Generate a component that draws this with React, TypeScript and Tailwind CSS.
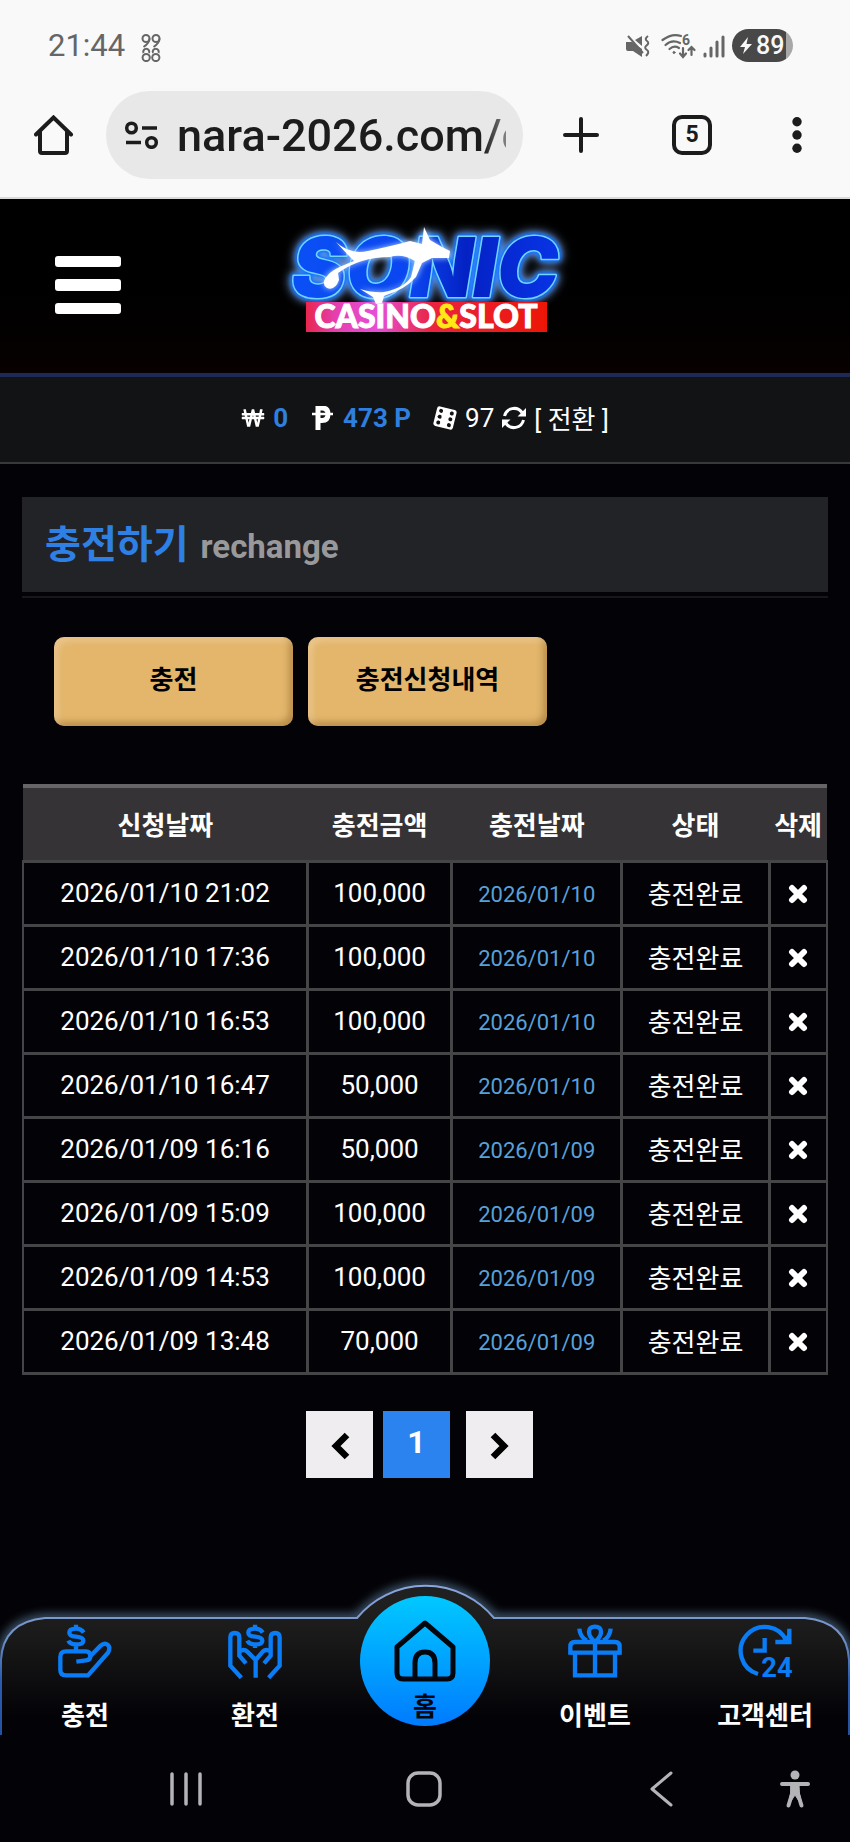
import React from "react";
import { FaWonSign } from "react-icons/fa";

type Deposit = { requested: string; amount: string; credited: string };

const deposits: Deposit[] = [
  { requested: "2026/01/10 21:02", amount: "100,000", credited: "2026/01/10" },
  { requested: "2026/01/10 17:36", amount: "100,000", credited: "2026/01/10" },
  { requested: "2026/01/10 16:53", amount: "100,000", credited: "2026/01/10" },
  { requested: "2026/01/10 16:47", amount: "50,000", credited: "2026/01/10" },
  { requested: "2026/01/09 16:16", amount: "50,000", credited: "2026/01/09" },
  { requested: "2026/01/09 15:09", amount: "100,000", credited: "2026/01/09" },
  { requested: "2026/01/09 14:53", amount: "100,000", credited: "2026/01/09" },
  { requested: "2026/01/09 13:48", amount: "70,000", credited: "2026/01/09" },
];

function StatusBar() {
  return (
    <div className="flex h-[91px] items-center justify-between pr-[57px] pl-12 text-[#666]">
      <div className="flex items-center gap-4">
        <span className="text-[31px] leading-8">21:44</span>
        <svg className="mt-1 h-7 w-5" viewBox="0 0 20 28" fill="none" stroke="currentColor" strokeWidth="2">
          <circle cx="5" cy="4.500" r="3.500" />
          <path d="M8.500 4.500 Q8.500 9 2.500 13" />
          <circle cx="15" cy="4.500" r="3.500" />
          <path d="M18.500 4.500 Q18.500 9 12.500 13" />
          <circle cx="5.200" cy="23.500" r="3.600" />
          <circle cx="14.800" cy="23.500" r="3.600" />
          <path d="M2.500 19 A3 3 0 1 1 8 19 M12 19 A3 3 0 1 1 17.500 19" />
        </svg>
      </div>
      <div className="flex items-center">
        <svg className="h-6 w-6" viewBox="0 0 24 24" fill="currentColor">
          <path d="M0 8 H6 L16 15 V23 L7 17 H2 Q0 17 0 15 Z" />
          <path d="M16 2 V12 L9 6 Z" />
          <path d="M2 2 L17 19" stroke="currentColor" strokeWidth="2" />
          <path d="M22 2 Q18 5 21 7 Q24 9 20 12 Q18 14 21 16 Q24 18 20 22" fill="none" stroke="currentColor" strokeWidth="2" />
        </svg>
        <svg className="ml-[11px] h-6 w-[35px] overflow-visible" viewBox="0 0 35 24" fill="none" stroke="currentColor" strokeWidth="2.200" strokeLinecap="round">
          <path d="M1.500 6 Q11 -1 20 2" />
          <path d="M4.500 11 Q11 5 19 9" />
          <path d="M8.500 15 Q13 11 18 14" />
          <circle cx="13" cy="18.500" r="1" fill="currentColor" strokeWidth="1" />
          <path d="M22 14 V22 M19 19.500 L22 23 L25 19.500 M30.500 21 V13 M27.500 16 L30.500 13 L33.500 16" />
          <text x="21" y="11" fontSize="14" fontWeight="700" fill="currentColor" stroke="none">6</text>
        </svg>
        <svg className="ml-[7px] h-6 w-[22px]" viewBox="0 0 22 24" stroke="currentColor" strokeWidth="3" strokeLinecap="round">
          <path d="M2 20 V22 M8 14 V22 M14 8 V22 M20 3 V22" />
        </svg>
        <div className="ml-[7px] flex h-[33px] w-[61px] items-center rounded-full bg-[linear-gradient(to_right,#484848_88%,#a8a8a8_88%)] pl-2 text-[#f8f8f8]">
          <svg className="h-[17px] w-3" viewBox="0 0 12 17" fill="currentColor">
            <path d="M8 0 L0 10 H5 L3 17 L12 7 H6.500 Z" />
          </svg>
          <span className="ml-1 text-[25px] leading-8 font-medium">89</span>
        </div>
      </div>
    </div>
  );
}

function BrowserBar() {
  return (
    <div className="flex h-[108px] items-start border-b-2 border-[#dadada] pr-[33px] pl-[34px] text-[#1c1c1c]">
      <button type="button" aria-label="홈페이지" className="mt-6 h-10 w-10">
        <svg className="h-10 w-10" viewBox="0 0 40 40" fill="none" stroke="currentColor" strokeWidth="4" strokeLinecap="round" strokeLinejoin="round">
          <path d="M2 19.500 L19.500 2.500 L37 19.500" strokeLinejoin="miter" />
          <path d="M6 17 V36 Q6 38 8 38 H31 Q33 38 33 36 V17" />
        </svg>
      </button>
      <div className="ml-8 flex h-[88px] min-w-0 flex-1 items-center rounded-full bg-[#e8e8e8] pr-[17px] pl-[18px]">
        <svg className="h-7 w-[35px] shrink-0" viewBox="0 0 35 28" fill="none" stroke="currentColor" strokeWidth="3.500">
          <circle cx="7.500" cy="7" r="4.800" />
          <circle cx="27.500" cy="21.500" r="4.800" />
          <path d="M18 7 H33 M2 21.500 H17" />
        </svg>
        <input
          aria-label="주소"
          defaultValue="nara-2026.com/c"
          className="ml-[18px] h-[88px] min-w-0 flex-1 bg-transparent text-[45px] font-medium outline-none [mask-image:linear-gradient(to_right,#000_93%,rgba(0,0,0,0.5))]"
        />
      </div>
      <button type="button" aria-label="새 탭" className="mt-[26px] ml-10 h-9 w-9">
        <svg className="h-9 w-9" viewBox="0 0 36 36" stroke="currentColor" strokeWidth="4" strokeLinecap="round">
          <path d="M18 2 V34 M2 18 H34" />
        </svg>
      </button>
      <button type="button" aria-label="탭 5개" className="mt-6 ml-[73px] flex h-10 w-10 items-center justify-center rounded-[10px] border-4 border-[#1c1c1c] text-[23px] leading-8 font-bold">
        5
      </button>
      <button type="button" aria-label="메뉴 더보기" className="mt-[26px] ml-[65px] flex h-9 w-10 items-center justify-center">
        <svg className="h-9 w-[10px]" viewBox="0 0 10 36" fill="currentColor">
          <circle cx="5" cy="4.700" r="4.700" />
          <circle cx="5" cy="18" r="4.700" />
          <circle cx="5" cy="31.300" r="4.700" />
        </svg>
      </button>
    </div>
  );
}

function Logo() {
  return (
    <svg className="h-[120px] w-[306px] overflow-visible" viewBox="0 0 306 120" role="img" aria-label="SONIC CASINO&SLOT">
      <defs>
        <linearGradient id="letters" x1="0" x2="1" y1="0" y2="0">
          <stop offset="0" stopColor="#0a50f5" />
          <stop offset="0.450" stopColor="#0a45f0" />
          <stop offset="0.650" stopColor="#0422c4" />
          <stop offset="1" stopColor="#0834e6" />
        </linearGradient>
        <linearGradient id="plate" x1="0" x2="1" y1="0" y2="0">
          <stop offset="0" stopColor="#e8264e" />
          <stop offset="0.120" stopColor="#e53fae" />
          <stop offset="0.300" stopColor="#e64fd8" />
          <stop offset="0.520" stopColor="#ea2440" />
          <stop offset="1" stopColor="#ec1606" />
        </linearGradient>
      </defs>
      <text
        x="153"
        y="84"
        textAnchor="middle"
        fontSize="82"
        fill="url(#letters)"
        stroke="#6fd4ff"
        strokeWidth="3"
        strokeLinejoin="round"
        paintOrder="stroke"
        className="font-[Inter] font-black italic [filter:drop-shadow(0_0_2px_#0a6cff)_drop-shadow(0_0_2px_#0a6cff)_drop-shadow(0_0_5px_#8fbcff)]"
      >
        SONIC
      </text>
      <rect x="34" y="89" width="241" height="30" fill="url(#plate)" />
      <path
        className="[filter:drop-shadow(0_0_3px_#b5d6ff)]"
        d="M64 29 Q78 42 96 38 Q120 33 138 28 L150 31 L152 14 L158 27 L170 34 L178 38 L177 45 L160 45 L150 50 L144 64 Q134 76 112 83 L110 90 L104 91 L101 84 L88 76 Q102 80 112 79 Q132 75 139 64 L143 48 Q130 40 118 44 Q88 44 66 60 L67 67 Q63 78 55 75 Q48 70 56 62 Q60 56 82 48 Q74 40 64 29 Z"
        fill="#fff"
      />
      <text x="154" y="115" textAnchor="middle" className="font-[Lato] font-black" fontSize="32" fill="#fff" stroke="#fff" strokeWidth="1">
        CASINO<tspan fill="#ffe815" stroke="#ffe815">&amp;</tspan>SLOT
      </text>
    </svg>
  );
}

function SiteHeader() {
  return (
    <header className="grid h-[178px] grid-cols-[1fr_auto_1fr] items-start border-b-4 border-[#1d2a55] bg-linear-to-b from-black to-[#080001] px-[55px]">
      <button type="button" aria-label="전체 메뉴" className="mt-[57px] flex w-[66px] flex-col gap-3">
        <span className="h-[11px] w-full rounded-[3px] bg-white" />
        <span className="h-3 w-full rounded-[3px] bg-white" />
        <span className="h-[11px] w-full rounded-[3px] bg-white" />
      </button>
      <a href="#" className="mt-[14px]">
        <Logo />
      </a>
    </header>
  );
}

function BalanceBar() {
  return (
    <div className="flex h-[87px] items-center justify-center border-b-2 border-[#39393c] bg-[#111315] pb-1 text-[26px] leading-8 text-white">
      <FaWonSign className="h-5 w-6" />
      <span className="ml-2 font-bold text-[#2f7fdf]">0</span>
      <svg className="ml-6 h-6 w-[21px]" viewBox="0 0 21 24" fill="none" stroke="currentColor">
        <path d="M6 24 V2 H10 Q16 2 16 8 Q16 14.500 10 14.500 H6" strokeWidth="5" />
        <path d="M0 8 H21" strokeWidth="2.500" />
      </svg>
      <span className="ml-[10px] font-bold text-[#2f7fdf]">473 P</span>
      <svg className="ml-[22px] h-6 w-6" viewBox="0 0 24 24">
        <g transform="rotate(14 12 12)">
          <rect x="2" y="2" width="20" height="20" rx="2.500" fill="#fff" />
          <g fill="#111315">
            <circle cx="6.500" cy="6" r="2" />
            <circle cx="6.500" cy="12" r="2" />
            <circle cx="6.500" cy="18" r="2" />
            <circle cx="17.500" cy="6" r="2" />
            <circle cx="17.500" cy="12" r="2" />
            <circle cx="17.500" cy="18" r="2" />
          </g>
        </g>
      </svg>
      <span className="ml-2">97</span>
      <button type="button" className="ml-2 flex items-center">
        <svg className="h-6 w-6" viewBox="0 0 24 24" fill="none" stroke="currentColor" strokeWidth="3">
          <path d="M2.500 10 A9.800 9.800 0 0 1 20 6.500 M21.500 14 A9.800 9.800 0 0 1 4 17.500" />
          <path d="M24 2 V10.500 H15.500 Z M0 22 V13.500 H8.500 Z" fill="currentColor" stroke="none" />
        </svg>
        <span className="mt-1 ml-2">[ 전환 ]</span>
      </button>
    </div>
  );
}

function ActionButton({ children }: { children: React.ReactNode }) {
  return (
    <button
      type="button"
      className="h-[89px] w-[239px] rounded-[10px] bg-[#e3b66c] pb-1 text-[26px] leading-8 font-bold text-black shadow-[inset_4px_4px_6px_rgba(255,235,215,0.3),inset_-4px_-4px_6px_rgba(110,65,10,0.35)]"
    >
      {children}
    </button>
  );
}

function DepositTable() {
  const cell = "border-[3px] border-[#454447] p-0 first:border-l-2 last:border-r-2";
  return (
    <table className="mt-[58px] w-full table-fixed border-collapse text-center text-[26px] leading-8 text-white">
      <colgroup>
        <col className="w-[35.4%]" />
        <col className="w-[17.9%]" />
        <col className="w-[21.2%]" />
        <col className="w-[18.3%]" />
        <col className="w-[7.2%]" />
      </colgroup>
      <thead>
        <tr className="h-[75px] border-t-4 border-[#666467] bg-[#353336]">
          {["신청날짜", "충전금액", "충전날짜", "상태", "삭제"].map((h) => (
            <th key={h} scope="col" className="p-0 pt-1 font-bold whitespace-nowrap">
              {h}
            </th>
          ))}
        </tr>
      </thead>
      <tbody>
        {deposits.map((d) => (
          <tr key={d.requested} className="h-16">
            <td className={cell}>{d.requested}</td>
            <td className={cell}>{d.amount}</td>
            <td className={`${cell} text-[22px] text-[#5aa0d8]`}>
              <span className="block pt-[3px]">{d.credited}</span>
            </td>
            <td className={cell}>
              <span className="block pt-1">충전완료</span>
            </td>
            <td className={cell}>
              <button type="button" aria-label={`${d.requested} 삭제`} className="block w-full pt-[2px]">
                <svg className="mx-auto h-5 w-5" viewBox="0 0 20 20" stroke="#fff" strokeWidth="6" strokeLinecap="round">
                  <path d="M4 4 L16 16 M16 4 L4 16" />
                </svg>
              </button>
            </td>
          </tr>
        ))}
      </tbody>
    </table>
  );
}

function Pagination() {
  return (
    <nav aria-label="페이지" className="mt-9 flex justify-center pr-[11px]">
      <button type="button" aria-label="이전" className="flex h-[67px] w-[67px] items-center justify-center bg-[#efedef]">
        <svg className="mt-1 h-7 w-5" viewBox="0 0 20 28" fill="none" stroke="#000" strokeWidth="6.500">
          <path d="M17 3 L6 14 L17 25" />
        </svg>
      </button>
      <button type="button" aria-current="page" className="ml-[10px] h-[67px] w-[67px] bg-[#2a83ee] pb-1 text-[32px] font-bold text-white">
        1
      </button>
      <button type="button" aria-label="다음" className="ml-4 flex h-[67px] w-[67px] items-center justify-center bg-[#efedef]">
        <svg className="mt-1 h-7 w-5" viewBox="0 0 20 28" fill="none" stroke="#000" strokeWidth="6.500">
          <path d="M3 3 L14 14 L3 25" />
        </svg>
      </button>
    </nav>
  );
}

function TabLink({ label, children }: { label: string; children: React.ReactNode }) {
  return (
    <a href="#" className="flex flex-col items-center pt-[54px] text-[26px] leading-8 font-bold text-white">
      <svg className="h-[54px] w-[54px] overflow-visible text-[#0a7cf5]" viewBox="0 0 162 162" fill="none" stroke="currentColor" strokeWidth="13">
        {children}
      </svg>
      <span className="mt-[22px]">{label}</span>
    </a>
  );
}

const barShape = "M1 170 V90 Q3 52 45 48 H357 A89 89 0 0 1 494 48 H805 Q847 52 849 90 V170";
const dollar = "M77 26 Q70 14 54 14 Q34 14 34 26 Q34 36 54 38 Q76 40 76 50 Q76 61 54 61 Q36 61 31 50 M54 2 V14 M54 61 V72";

function TabBar() {
  return (
    <nav aria-label="하단 메뉴" className="relative h-[165px]">
      <svg className="absolute inset-0 h-full w-full" viewBox="0 0 850 165" preserveAspectRatio="none" aria-hidden="true">
        <defs>
          <linearGradient id="bar" x1="0" x2="0" y1="0" y2="1">
            <stop offset="0.100" stopColor="#202020" />
            <stop offset="0.350" stopColor="#191919" />
            <stop offset="0.850" stopColor="#030206" />
          </linearGradient>
          <linearGradient id="edge" x1="0" x2="0" y1="0" y2="1">
            <stop offset="0" stopColor="#8ba6de" />
            <stop offset="0.350" stopColor="#6f8fc4" />
            <stop offset="0.600" stopColor="#2c5db0" />
            <stop offset="1" stopColor="#2450a0" />
          </linearGradient>
          <filter id="glow" x="-5%" y="-30%" width="110%" height="160%">
            <feGaussianBlur stdDeviation="5" />
          </filter>
        </defs>
        <path d={barShape} fill="none" stroke="#4c6a84" strokeWidth="7" filter="url(#glow)" />
        <path d={barShape} fill="url(#bar)" stroke="url(#edge)" strokeWidth="2" />
      </svg>
      <div className="relative grid grid-cols-5">
        <TabLink label="충전">
          <path d={dollar} />
          <path d="M54 82 H24 Q7 82 7 98 V138 Q7 154 24 154 H90 L150 86 Q158 72 150 63 Q140 54 128 65 L98 95" />
          <path d="M54 82 H84 Q97 82 97 96 Q97 108 84 109 L55 113 M54 70 V82" />
        </TabLink>
        <TabLink label="환전">
          <path d={dollar} transform="translate(27 0)" />
          <path d="M40 161 L7 125 V40 Q7 27 20 27 Q34 27 34 40 V95 L54 118" />
          <path d="M122 161 L155 125 V40 Q155 27 142 27 Q128 27 128 40 V95 L108 118" />
          <path d="M34 82 Q48 74 58 83 L83 108 L104 83 Q114 74 128 82 M83 104 V161" />
        </TabLink>
        <a href="#" className="mx-auto mt-[26px] flex h-[130px] w-[130px] flex-col items-center rounded-full bg-linear-to-b from-[#00c8ff] to-[#007aff] pt-6 text-[26px] leading-8 font-bold text-[#03060c]">
          <svg className="h-[62px] w-[62px] shrink-0" viewBox="0 0 62 62" fill="none" stroke="currentColor" strokeWidth="5" strokeLinejoin="round">
            <path d="M3 27 L31 3 L59 27 V53 Q59 59 53 59 H9 Q3 59 3 53 Z" />
            <path d="M21 59 V43 Q21 32 31 32 Q41 32 41 43 V59" />
          </svg>
          <span className="mt-[9px]">홈</span>
        </a>
        <TabLink label="이벤트">
          <path d="M7 92 V68 Q7 54 21 54 H141 Q155 54 155 68 V92" />
          <path d="M7 86 H155 M21 86 V154 H141 V86 M81 54 V154" />
          <path d="M81 54 C54 30 60 8 81 8 C102 8 108 30 81 54" />
          <path d="M34 14 Q36 38 56 50 M128 14 Q126 38 106 50" />
        </TabLink>
        <TabLink label="고객센터">
          <path d="M146 52 A72 72 0 1 0 60 150" />
          <path d="M154 14 V54 H112 M80 42 V80 H46" />
          <path d="M150 30 V52 H130 Z" fill="currentColor" stroke="none" />
          <text x="70" y="160" fontSize="82" fontWeight="700" fill="currentColor" stroke="none">24</text>
        </TabLink>
      </div>
    </nav>
  );
}

function SystemNav() {
  return (
    <div className="grid h-[107px] grid-cols-[372px_104px_1fr_110px] items-center text-[#b4b3b6]">
      <button type="button" aria-label="최근 앱" className="justify-self-center">
        <svg className="h-9 w-8" viewBox="0 0 32 36" stroke="currentColor" strokeWidth="3.500" strokeLinecap="round">
          <path d="M2 3 V33 M16 3 V33 M30 3 V33" />
        </svg>
      </button>
      <button type="button" aria-label="홈" className="justify-self-center">
        <svg className="h-9 w-9" viewBox="0 0 36 36" fill="none" stroke="currentColor" strokeWidth="3.500">
          <rect x="2" y="2" width="32" height="32" rx="10" />
        </svg>
      </button>
      <button type="button" aria-label="뒤로" className="mr-[66px] justify-self-end">
        <svg className="h-9 w-6" viewBox="0 0 24 36" fill="none" stroke="currentColor" strokeWidth="3" strokeLinecap="round" strokeLinejoin="round">
          <path d="M21 2 L2 18 L21 34" />
        </svg>
      </button>
      <button type="button" aria-label="접근성" className="justify-self-center">
        <svg className="h-[38px] w-[30px]" viewBox="0 0 30 38" fill="currentColor" stroke="currentColor" strokeLinecap="round" strokeLinejoin="round">
          <circle cx="15" cy="5" r="4.500" stroke="none" />
          <path d="M2 14 H28" strokeWidth="4" />
          <path d="M11 15 H19 L19.500 24 L22 35.500 L15 25 L8 35.500 L10.500 24 Z" strokeWidth="1" />
          <path d="M12 24 L8.500 35.500 M18 24 L21.500 35.500" strokeWidth="4" />
        </svg>
      </button>
    </div>
  );
}

export default function App() {
  return (
    <div className="flex min-h-screen flex-col bg-[#030206] font-[Roboto,'Noto_Sans_CJK_KR',sans-serif]">
      <div className="bg-[#f9f9f9]">
        <StatusBar />
        <BrowserBar />
      </div>
      <SiteHeader />
      <BalanceBar />
      <main className="px-[22px] pt-[33px]">
        <div className="border-b-2 border-[#17181b] pb-1">
          <h1 className="flex h-[95px] items-center gap-3 bg-[#222326] px-[23px]">
            <span className="text-[39px] leading-[48px] font-bold text-[#2f80e4]">충전하기</span>
            <span className="pt-1 text-[33px] leading-[40px] font-bold text-[#99999b]">rechange</span>
          </h1>
        </div>
        <div className="mt-[39px] flex gap-[15px] px-8">
          <ActionButton>충전</ActionButton>
          <ActionButton>충전신청내역</ActionButton>
        </div>
        <DepositTable />
        <Pagination />
      </main>
      <footer className="mt-auto">
        <TabBar />
        <SystemNav />
      </footer>
    </div>
  );
}
